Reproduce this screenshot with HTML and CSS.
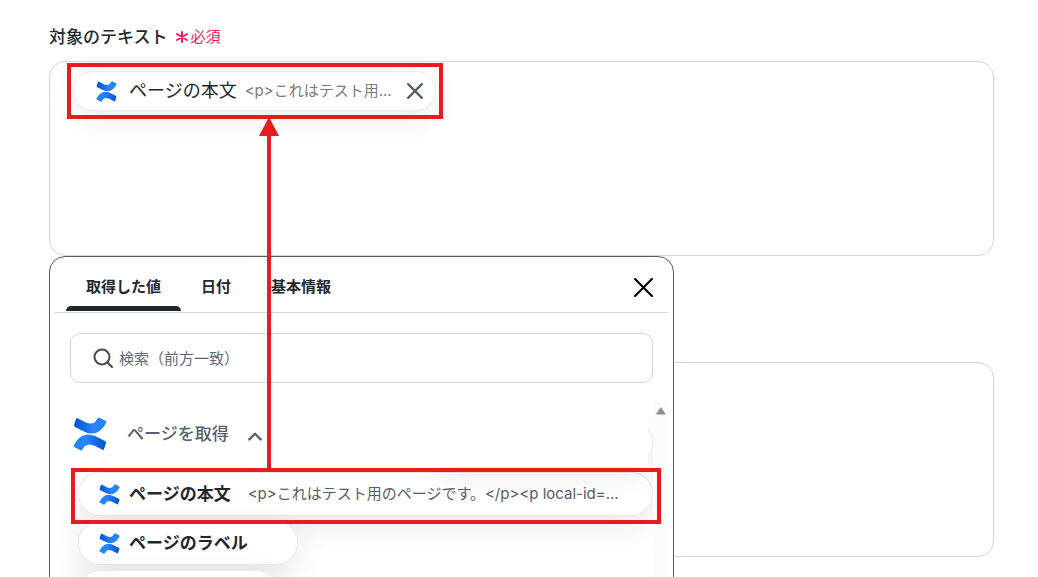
FILE: index.html
```html
<!DOCTYPE html>
<html lang="ja">
<head>
    <meta charset="UTF-8">
    <meta name="viewport" content="width=device-width, initial-scale=1.0">
    <title>対象のテキスト</title>
    <link rel="stylesheet" href="styles.css">
</head>
<body>
    <!-- shared logo -->
    <svg class="defs" aria-hidden="true">
        <defs>
            <linearGradient id="blueTop" x1="0" y1="0" x2="1" y2="0">
                <stop offset="0" stop-color="#0052cc"/>
                <stop offset="0.6" stop-color="#2684ff"/>
            </linearGradient>
            <linearGradient id="blueBottom" x1="1" y1="0" x2="0" y2="0">
                <stop offset="0" stop-color="#0052cc"/>
                <stop offset="0.6" stop-color="#2684ff"/>
            </linearGradient>
            <symbol id="logo" viewBox="0 0 34 34">
                <path fill="url(#blueTop)" d="M4 1 L12 5 Q18 8 22 5 L25 1 Q26 0 27 1 L33 4 Q34 5 33 6 Q30 12 25 15 Q19 18 12 15 L2 10 Q1 9 1 8 L3 2 Q3 1 4 1 Z"/>
                <path fill="url(#blueBottom)" d="M30 33 L22 29 Q16 26 12 29 L9 33 Q8 34 7 33 L1 30 Q0 29 1 28 Q4 22 9 19 Q15 16 22 19 L32 24 Q33 25 33 26 L31 32 Q31 33 30 33 Z"/>
            </symbol>
        </defs>
    </svg>

    <main class="container">
        <h1 class="field-label" id="targetLabel">対象のテキスト
            <span class="required">
                <svg class="asterisk" viewBox="0 0 12 12"><path d="M6 1V11M1 3L11 9M11 3L1 9"/></svg>必須
            </span>
        </h1>
        <div class="field" role="group" aria-labelledby="targetLabel">
            <div class="tag">
                <svg class="logo-small"><use href="#logo"/></svg>
                <span class="tag-name">ページの本文</span>
                <span class="tag-value">&lt;p&gt;これはテスト用...</span>
                <button type="button" class="icon-btn tag-remove" aria-label="削除">
                    <svg viewBox="0 0 14 14"><path d="M1 1L13 13M13 1L1 13"/></svg>
                </button>
            </div>
        </div>
        <div class="field field-next"></div>

        <section class="picker">
            <div class="tabs">
                <button type="button" class="tab active">取得した値</button>
                <button type="button" class="tab">日付</button>
                <button type="button" class="tab">基本情報</button>
                <button type="button" class="icon-btn picker-close" aria-label="閉じる">
                    <svg viewBox="0 0 18 18"><path d="M1 1L17 17M17 1L1 17"/></svg>
                </button>
            </div>
            <label class="search">
                <svg viewBox="0 0 20 20"><circle cx="9" cy="9" r="7.5"/><path d="M15 15L19 19"/></svg>
                <input type="text" placeholder="検索（前方一致）" aria-label="検索">
            </label>
            <div class="results">
                <div class="list">
                    <div class="pill pill-scrolled"></div>
                    <button type="button" class="group">
                        <svg class="logo-large"><use href="#logo"/></svg>
                        ページを取得
                        <svg class="chevron" viewBox="0 0 14 10"><path d="M2 8L7 3L12 8"/></svg>
                    </button>
                    <button type="button" class="pill pill-wide">
                        <svg class="logo-small"><use href="#logo"/></svg>
                        <span>ページの本文</span>
                        <span class="pill-value">&lt;p&gt;これはテスト用のページです。&lt;/p&gt;&lt;p local-id=...</span>
                    </button>
                    <button type="button" class="pill">
                        <svg class="logo-small"><use href="#logo"/></svg>
                        <span>ページのラベル</span>
                    </button>
                    <button type="button" class="pill pill-last" aria-label="次の項目"></button>
                </div>
                <div class="scrollbar">
                    <svg viewBox="0 0 10 8"><path d="M5 1L9 7H1Z"/></svg>
                </div>
            </div>
        </section>

        <!-- highlight frames and arrow -->
        <div class="mark mark-field"></div>
        <div class="mark mark-item"></div>
        <div class="arrow"></div>
    </main>
</body>
</html>
```
FILE: styles.css
```css
* {
    box-sizing: border-box;
}

body {
    margin: 0;
    height: 100vh;
    overflow: hidden;
    font-family: Inter, "Noto Sans CJK JP", sans-serif;
    background-color: #fff;
    color: #22272f;
}

button, input {
    font-family: inherit;
    color: inherit;
}

svg {
    flex: none;
    fill: none;
    stroke-linecap: round;
    stroke-linejoin: round;
}

.defs {
    position: absolute;
    width: 0;
    height: 0;
}

.container {
    position: relative;
    height: 100%;
    padding: 25px 44px 0 49px;
}

.field-label {
    display: flex;
    align-items: center;
    gap: 8px;
    margin: 0 0 12px;
    font-size: 17px;
    font-weight: 500;
    line-height: 24px;
}

.required {
    display: flex;
    align-items: center;
    gap: 3px;
    color: #f01e5a;
    font-size: 15px;
    font-weight: 400;
}

.asterisk {
    width: 12px;
    height: 12px;
    stroke: #f01e5a;
    stroke-width: 2;
}

.field {
    height: 195px;
    padding: 9px 23px;
    border: 1px solid #d0d5df;
    border-radius: 16px;
    overflow: hidden;
}

.field-next {
    margin-top: 106px;
}

.tag {
    display: flex;
    align-items: center;
    width: 363px;
    height: 40px;
    padding: 0 12px 0 22px;
    border: 1px solid #e8ebf1;
    border-radius: 20px;
    background-color: #fff;
    box-shadow: 0 8px 32px rgba(0, 0, 0, 0.08);
    line-height: 24px;
    white-space: nowrap;
}

.logo-small {
    width: 21px;
    height: 21px;
}

.tag-name {
    margin-left: 12px;
    font-size: 18px;
}

.tag-value {
    margin-left: 8px;
    color: #7b7b7b;
    font-size: 15px;
}

.icon-btn {
    display: flex;
    margin-left: auto;
    padding: 0;
    border: none;
    background: none;
    cursor: pointer;
}

.tag-remove svg {
    width: 16px;
    height: 16px;
    stroke: #55606e;
    stroke-width: 2;
}

/* value picker */
.picker {
    position: absolute;
    top: 256px;
    left: 49px;
    width: 625px;
    height: 340px;
    padding: 0 5px;
    border: 1px solid #545d69;
    border-radius: 16px 16px 0 0;
    background-color: #fff;
}

.tabs {
    display: flex;
    align-items: center;
    height: 56px;
    padding: 0 15px 0 11px;
    border-bottom: 1px solid #d0d5df;
}

.tab {
    height: 100%;
    padding: 7px 20px 0;
    border: none;
    border-bottom: 5px solid transparent;
    background: none;
    font-size: 15px;
    font-weight: 700;
    cursor: pointer;
}

.tab.active {
    position: relative;
}

.tab.active::after {
    content: "";
    position: absolute;
    left: 0;
    right: 0;
    bottom: -4px;
    height: 5px;
    border-radius: 5px 5px 0 0;
    background-color: #22272f;
}

.picker-close svg {
    width: 19px;
    height: 19px;
    margin-top: 6px;
    stroke: #000;
    stroke-width: 2;
}

.search {
    display: flex;
    align-items: center;
    gap: 6px;
    height: 50px;
    margin: 20px 15px;
    padding: 0 21px 0 22px;
    border: 1px solid #d0d5df;
    border-radius: 10px;
}

.search svg {
    width: 20px;
    height: 20px;
    stroke: #414a56;
    stroke-width: 2;
}

.search input {
    flex: 1;
    padding: 0;
    border: none;
    outline: none;
    background: none;
    font-size: 15px;
}

.search input::placeholder {
    color: #5f6875;
}

.results {
    display: flex;
    height: 192px;
}

.list {
    position: relative;
    flex: 1;
    padding-left: 17px;
    overflow: hidden;
}

.group {
    position: relative;
    display: flex;
    align-items: center;
    width: 576px;
    height: 64px;
    padding: 0 0 3px 1px;
    border: none;
    background-color: #fff;
    color: #55606e;
    font-size: 17px;
    font-weight: 500;
    line-height: 24px;
    cursor: pointer;
}

.logo-large {
    width: 34px;
    height: 34px;
    margin-right: 20px;
}

.chevron {
    width: 16px;
    height: 12px;
    margin: 4px 0 0 18px;
    stroke: #55606e;
    stroke-width: 2;
}

.pill {
    display: flex;
    align-items: center;
    gap: 9px;
    width: 220px;
    height: 44px;
    margin: 5px 0 0 6px;
    padding: 0 20px;
    border: 1px solid #e8ebf1;
    border-radius: 22px;
    background-color: #fff;
    box-shadow: 0 8px 32px rgba(0, 0, 0, 0.1);
    font-size: 17px;
    font-weight: 700;
    line-height: 24px;
    white-space: nowrap;
    cursor: pointer;
}

.pill-wide {
    width: 575px;
}

.pill-last {
    width: 200px;
}

.pill-value {
    margin-left: 8px;
    color: #55606e;
    font-size: 15px;
    font-weight: 400;
}

/* entry that has scrolled under the group header */
.pill-scrolled {
    position: absolute;
    top: 18px;
    right: 0;
    width: 220px;
    margin-top: 0;
}

.scrollbar {
    width: 15px;
    padding-top: 4px;
    background-color: #fcfcfc;
}

.scrollbar svg {
    display: block;
    width: 10px;
    height: 8px;
    margin: 0 auto;
    fill: #8b8b8b;
    stroke: #8b8b8b;
}

/* annotations */
.mark {
    position: absolute;
    border: 4px solid #e81c1c;
}

.mark-field {
    top: 63px;
    left: 67px;
    width: 376px;
    height: 56px;
}

.mark-item {
    top: 468px;
    left: 71px;
    width: 590px;
    height: 56px;
}

.arrow {
    position: absolute;
    top: 136px;
    left: 267px;
    width: 4px;
    height: 334px;
    background-color: #e81c1c;
}

.arrow::before {
    content: "";
    position: absolute;
    bottom: 100%;
    left: -8px;
    border: 10px solid transparent;
    border-top: none;
    border-bottom: 19px solid #e81c1c;
}
```
